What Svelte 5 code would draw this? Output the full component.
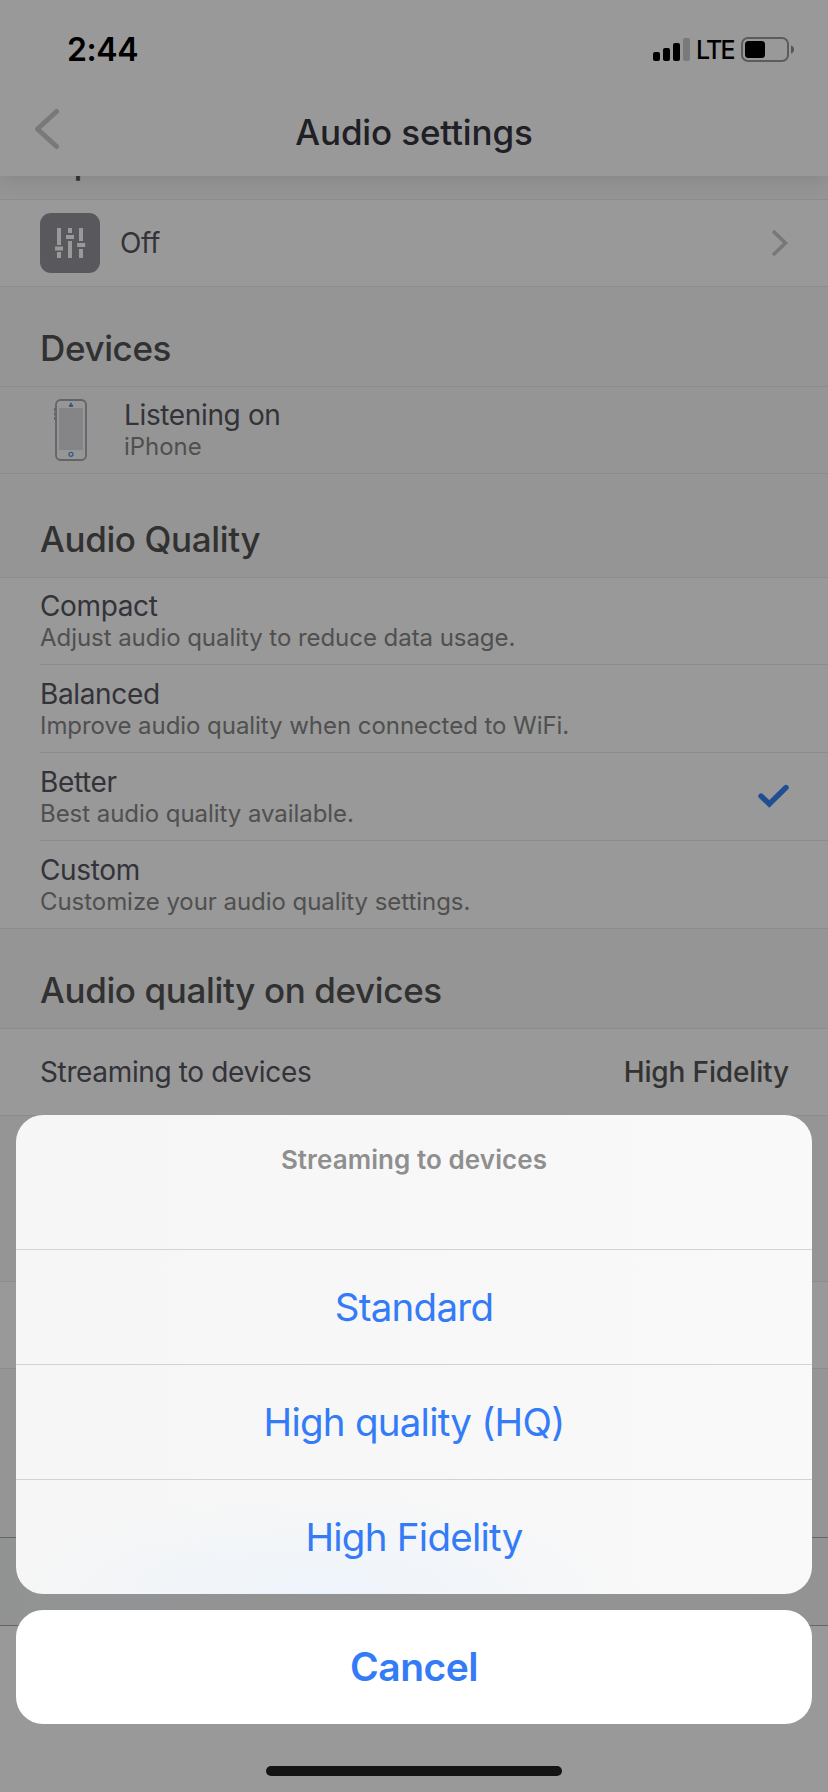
<script>
    const qualities = [
        { name: 'Compact', info: 'Adjust audio quality to reduce data usage.' },
        { name: 'Balanced', info: 'Improve audio quality when connected to WiFi.' },
        { name: 'Better', info: 'Best audio quality available.' },
        { name: 'Custom', info: 'Customize your audio quality settings.' }
    ]
    const options = ['Standard', 'High quality (HQ)', 'High Fidelity']
    let selected = 'Better'
    let streaming = 'High Fidelity'
    let open = true

    function choose(option) {
        streaming = option
        open = false
    }
</script>

<div class="screen">
    <header>
        <div class="status">
            <span class="time">2:44</span>
            <svg class="signal" width="38" height="24" viewBox="0 0 38 24">
                <rect x="0" y="14" width="7" height="9" rx="2"/>
                <rect x="10" y="10" width="7" height="13" rx="2"/>
                <rect x="20" y="5" width="7" height="18" rx="2"/>
                <rect x="30" y="0" width="7" height="23" rx="2" opacity=".2"/>
            </svg>
            <span class="network">LTE</span>
            <svg width="54" height="26" viewBox="0 0 54 26">
                <rect x="1" y="1" width="46" height="23" rx="6" fill="none" stroke="#000" stroke-opacity=".4" stroke-width="2"/>
                <rect x="4" y="4" width="20" height="17" rx="3.5"/>
                <path d="M50 8.500c4 1 4 7 0 8z" opacity=".45"/>
            </svg>
        </div>
        <div class="nav">
            <svg class="back" width="26" height="42" viewBox="0 0 26 42">
                <path d="M22.500 3.500 3.500 21l19 17.500" fill="none" stroke="#cacaca" stroke-width="5" stroke-linecap="round" stroke-linejoin="round"/>
            </svg>
            <h1>Audio settings</h1>
        </div>
    </header>

    <main>
        <h2>Equalizer</h2>
        <div class="row">
            <svg class="tile" width="60" height="60" viewBox="0 0 60 60">
                <rect width="60" height="60" rx="11" fill="#94939c"/>
                <path fill="#fff" d="M17 15h4v17h-4zM15 33.500h8v4h-8zM17 39h4v6h-4zM28 15h4v5h-4zM26 22h8v4h-8zM28 28h4v17h-4zM39 15h4v13h-4zM37.200 30h8v4h-8zM39 36h4v9h-4z"/>
            </svg>
            <span class="name grow">Off</span>
            <svg class="chevron" width="18" height="28" viewBox="0 0 18 28">
                <path d="M2 2 14.500 14 2 26" fill="none" stroke="#c8c8ca" stroke-width="3.600"/>
            </svg>
        </div>

        <h2>Devices</h2>
        <div class="row plain">
            <svg class="phone" width="34" height="62" viewBox="0 0 34 62">
                <rect x="2" y="1" width="30" height="60" rx="4.500" fill="#fafafa" stroke="#a5a5ad" stroke-width="1.800"/>
                <path d="M.7 9v3M.7 13.500v3M.7 18v3" stroke="#a5a5ad" stroke-width="1.400"/>
                <rect x="5" y="9" width="24" height="42" fill="#dedee3"/>
                <path d="M15 6.300c0-1 4-1 4 0v1.500h-4zM16.200 3.800h1.500v1.500h-1.500z" fill="#3b86d8"/>
                <circle cx="17" cy="55.300" r="2" fill="none" stroke="#4c94dc" stroke-width="1.200"/>
            </svg>
            <div>
                <div class="name">Listening on</div>
                <div class="info">iPhone</div>
            </div>
        </div>

        <h2 class="tall">Audio Quality</h2>
        <div class="list">
            {#each qualities as quality}
            <div class="item">
                <div class="grow">
                    <div class="name">{quality.name}</div>
                    <div class="info">{quality.info}</div>
                </div>
                {#if quality.name === selected}
                <svg width="32" height="26" viewBox="0 0 32 26">
                    <path d="m4 12 8.300 8L29 3.500" fill="none" stroke="#3484f3" stroke-width="5.400" stroke-linecap="round"/>
                </svg>
                {/if}
            </div>
            {/each}
        </div>

        <h2>Audio quality on devices</h2>
        <div class="row">
            <span class="name grow">Streaming to devices</span>
            <span class="name value">{streaming}</span>
        </div>
        <div class="gap"></div>
        <div class="row"></div>
        <div class="gap"></div>
        <div class="player"></div>
    </main>

    {#if open}
    <div class="backdrop">
        <div class="sheet">
            <div class="title">Streaming to devices</div>
            {#each options as option}
            <button on:click={() => choose(option)}>{option}</button>
            {/each}
        </div>
        <button class="cancel" on:click={() => open = false}>Cancel</button>
        <div class="home"></div>
    </div>
    {/if}
</div>

<style>
    :global(body) {
        margin: 0;
    }

    .screen {
        position: relative;
        width: 828px;
        height: 1792px;
        overflow: hidden;
        background-color: white;
        font-family: Inter, "Liberation Sans", sans-serif;
    }

    header {
        position: relative;
        z-index: 1;
        height: 176px;
        background-color: white;
        box-shadow: 0 4px 20px rgba(0, 0, 0, .1);
    }

    .status {
        display: flex;
        align-items: center;
        box-sizing: border-box;
        height: 99px;
        padding: 0 33px 0 67px;
    }

    .time {
        flex: 1;
        font-size: 32px;
        font-weight: 600;
        letter-spacing: -.4px;
    }

    .signal {
        margin-right: 5px;
    }

    .network {
        width: 45px;
        padding-top: 1px;
        font-size: 25px;
        font-weight: 500;
        letter-spacing: -1.8px;
    }

    .nav {
        display: grid;
        grid-template-columns: 94px 1fr 94px;
        align-items: center;
        height: 65px;
    }

    .back {
        margin: -5px 0 0 34px;
    }

    h1 {
        margin: 0;
        font-size: 35px;
        font-weight: 500;
        letter-spacing: -.15px;
        text-align: center;
        color: #34343e;
    }

    main {
        height: 1693px;
        margin-top: -77px;
        background-color: #f8f8f8;
    }

    h2 {
        box-sizing: border-box;
        height: 100px;
        margin: 0;
        padding: 42px 40px 0;
        font-size: 35px;
        font-weight: 500;
        line-height: 40px;
        letter-spacing: -.37px;
        color: #535353;
    }

    h2.tall {
        height: 104px;
        padding-top: 46px;
    }

    .row {
        display: flex;
        align-items: center;
        box-sizing: border-box;
        height: 88px;
        padding: 0 39px 0 40px;
        border: solid #e9e9e9;
        border-width: 1px 0;
        background-color: white;
        margin-bottom: -1px;
    }

    .plain {
        background-color: #f9f9f9;
    }

    .tile {
        margin-right: 20px;
    }

    .phone {
        margin: 0 36px 0 14px;
    }

    .grow {
        flex: 1;
    }

    .name {
        font-size: 28px;
        line-height: 32px;
        letter-spacing: -.36px;
        color: #555560;
    }

    .info {
        margin: 1px 0 -1px;
        font-size: 24px;
        line-height: 30px;
        letter-spacing: -.05px;
        color: #858585;
    }

    .value {
        font-weight: 500;
        letter-spacing: -.15px;
        color: #555;
    }

    .list {
        margin-bottom: -1px;
        border: solid #e9e9e9;
        border-width: 1px 0;
        background-color: white;
    }

    .item {
        display: flex;
        align-items: center;
        box-sizing: border-box;
        height: 88px;
        margin-left: 40px;
        padding-right: 39px;
        border-top: 1px solid #e9e9e9;
    }

    .item:first-child {
        height: 86px;
        border-top: 0;
    }

    .gap {
        height: 166px;
    }

    .player {
        height: 87px;
        margin-top: 3px;
        border: solid #aaa;
        border-width: 1px 0;
        background: linear-gradient(90deg, #f2f5f3, #f4f5f6 6%, #f4f5f8 18%, #f6f6f6 26%);
        box-shadow: 0 200px 0 200px white;
        clip-path: inset(0 0 -200px);
    }

    .backdrop {
        position: absolute;
        inset: 0;
        z-index: 2;
        display: flex;
        flex-direction: column;
        justify-content: flex-end;
        padding: 0 16px 16px;
        background-color: rgba(0, 0, 0, .4);
    }

    .sheet {
        overflow: hidden;
        height: 479px;
        margin-bottom: 16px;
        border-radius: 27px;
        background: radial-gradient(ellipse 320px 100px at 38% 100%, #eef4fb, rgba(238, 244, 251, 0)), linear-gradient(90deg, #f6f6f6, #f9f9f9);
    }

    .title {
        box-sizing: border-box;
        height: 134px;
        padding-top: 29px;
        font-size: 26px;
        font-weight: 600;
        line-height: 32px;
        letter-spacing: .08px;
        text-align: center;
        color: #8f8f8f;
    }

    button {
        display: block;
        box-sizing: border-box;
        width: 100%;
        height: 115px;
        padding: 0;
        border: 0;
        border-top: 1px solid #d2d3d3;
        background: none;
        font: 38.5px Inter, "Liberation Sans", sans-serif;
        letter-spacing: -.75px;
        color: #347bf7;
    }

    .cancel {
        height: 114px;
        padding-bottom: 2px;
        border: 0;
        border-radius: 27px;
        background-color: white;
        font-size: 39px;
        font-weight: 600;
        letter-spacing: -.5px;
    }

    .home {
        width: 296px;
        height: 10px;
        margin: 42px auto 0;
        border-radius: 5px;
        background-color: #141414;
    }
</style>
